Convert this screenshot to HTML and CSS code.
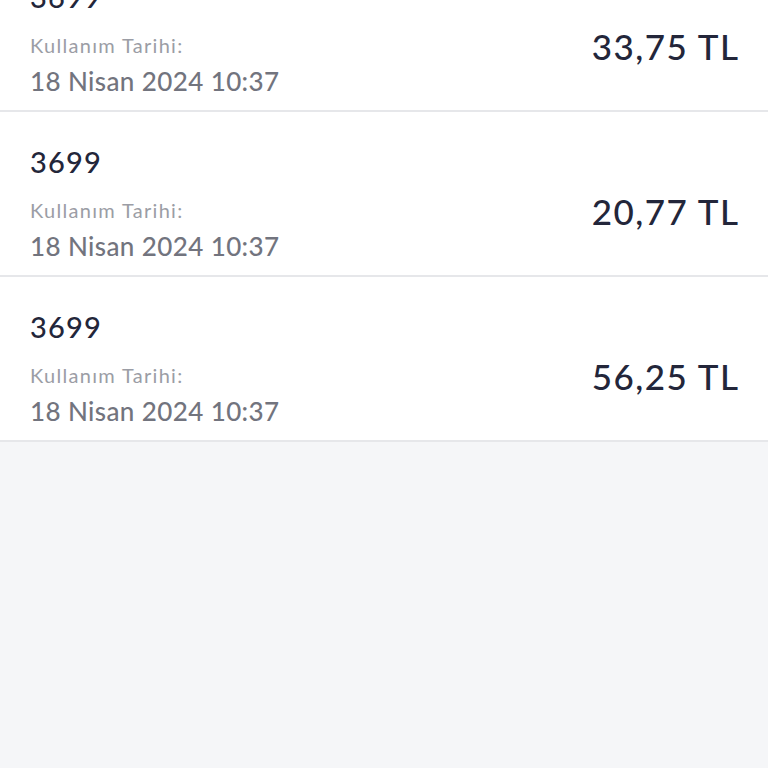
FILE: index.html
```html
<!DOCTYPE html>
<html lang="tr">
<head>
    <meta charset="UTF-8">
    <meta name="viewport" content="width=device-width, initial-scale=1.0">
    <title>Kullanımlar</title>
    <link rel="stylesheet" href="styles.css">
</head>
<body>
    <div class="usage-list">
        <div class="usage-row">
            <div class="usage-info">
                <div class="usage-code">3699</div>
                <div class="usage-label">Kullanım Tarihi:</div>
                <div class="usage-date">18 Nisan 2024 10:37</div>
            </div>
            <div class="usage-amount">33,75 TL</div>
        </div>
        <div class="usage-row">
            <div class="usage-info">
                <div class="usage-code">3699</div>
                <div class="usage-label">Kullanım Tarihi:</div>
                <div class="usage-date">18 Nisan 2024 10:37</div>
            </div>
            <div class="usage-amount">20,77 TL</div>
        </div>
        <div class="usage-row">
            <div class="usage-info">
                <div class="usage-code">3699</div>
                <div class="usage-label">Kullanım Tarihi:</div>
                <div class="usage-date">18 Nisan 2024 10:37</div>
            </div>
            <div class="usage-amount">56,25 TL</div>
        </div>
    </div>
</body>
</html>
```

FILE: styles.css
```css
body {
    margin: 0;
    background-color: #f5f6f8;
    font-family: Lato, "Noto Sans", sans-serif;
}
.usage-list {
    margin-top: -53px;
    background-color: #fff;
}
.usage-row {
    display: flex;
    justify-content: space-between;
    padding: 33px 30px 12px 30px;
    border-bottom: 2px solid #e6e7ea;
}
.usage-code {
    font-size: 29px;
    line-height: 34px;
    font-weight: 500;
    letter-spacing: 1.2px;
    color: #23263a;
    margin-bottom: 16px;
}
.usage-label {
    font-size: 20px;
    line-height: 30px;
    letter-spacing: 1.3px;
    color: #9b9da5;
    margin-bottom: 4px;
}
.usage-date {
    font-size: 26px;
    line-height: 34px;
    font-weight: 500;
    letter-spacing: 0.4px;
    color: #72747e;
}
.usage-amount {
    align-self: flex-end;
    margin-bottom: 32px;
    font-size: 35px;
    line-height: 40px;
    font-weight: 500;
    letter-spacing: 1.5px;
    margin-right: -1.5px;
    color: #23263a;
}
```
